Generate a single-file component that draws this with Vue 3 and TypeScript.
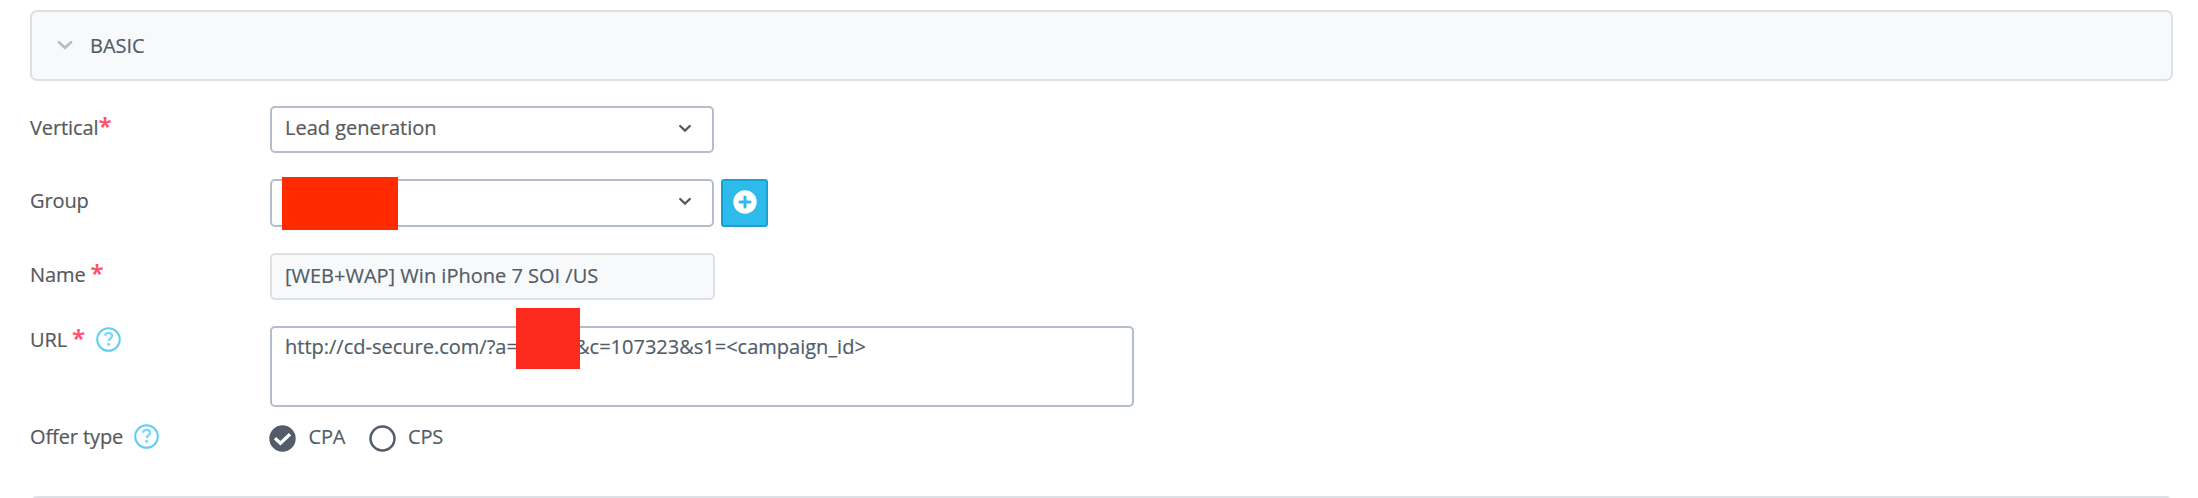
<script setup lang="ts">
import { ref } from 'vue'

type OfferType = 'CPA' | 'CPS'

const offerTypes: OfferType[] = ['CPA', 'CPS']
const selected = ref<OfferType>('CPA')
const vertical = 'Lead generation'
const offerName = '[WEB+WAP] Win iPhone 7 SOI /US'
const urlStart = 'http://cd-secure.com/?a='
const urlEnd = '&c=107323&s1=<campaign_id>'
</script>

<template>
  <main class="page">
    <header class="panel-head">
      <svg class="head-arrow" width="16" height="11" viewBox="0 0 16 11">
        <path d="M2 2.3 8 7.8 14 2.3" fill="none" stroke="#b5bfc9" stroke-width="2.8" stroke-linecap="round" />
      </svg>
      <span class="head-title">BASIC</span>
    </header>

    <section class="form">
      <div class="row row-vertical">
        <div class="label"><span>Vertical</span><i class="star tight">*</i></div>
        <div class="field select">
          <span class="value neutral">{{ vertical }}</span>
          <svg class="arrow" width="14" height="10" viewBox="0 0 14 10">
            <path d="M2.2 2 7 6.6 11.8 2" fill="none" stroke="#525b65" stroke-width="2.3" stroke-linecap="round" />
          </svg>
        </div>
      </div>

      <div class="row row-group">
        <div class="label"><span>Group</span></div>
        <div class="field select">
          <span class="mask mask-group"></span>
          <svg class="arrow" width="14" height="10" viewBox="0 0 14 10">
            <path d="M2.2 2 7 6.6 11.8 2" fill="none" stroke="#525b65" stroke-width="2.3" stroke-linecap="round" />
          </svg>
        </div>
        <button class="add" type="button" aria-label="Add group">
          <svg width="24" height="24" viewBox="0 0 24 24">
            <circle cx="12" cy="12" r="11.7" fill="#fff" />
            <path d="M12 7v10M7 12h10" stroke="#2dbbec" stroke-width="3" stroke-linecap="round" />
          </svg>
        </button>
      </div>

      <div class="row row-name">
        <div class="label"><span>Name</span><i class="star">*</i></div>
        <div class="field readonly"><span class="value name-value">{{ offerName }}</span></div>
      </div>

      <div class="row row-url">
        <div class="label">
          <span>URL</span><i class="star">*</i>
          <svg class="help help-url" width="25" height="25" viewBox="0 0 25 25">
            <circle cx="12.5" cy="12.5" r="11.3" fill="none" stroke="#5dcff3" stroke-width="2" />
            <path d="M9 8.7C9.3 6.8 10.7 5.9 12.5 5.9c2 0 3.5 1.1 3.5 2.9 0 2.6-3.3 2.7-3.3 5.2" fill="none" stroke="#7dd9f5" stroke-width="2.4" />
            <circle cx="12.6" cy="17.3" r="1.6" fill="#7dd9f5" />
          </svg>
        </div>
        <div class="field area">
          <span class="value url-start">{{ urlStart }}</span>
          <span class="value url-end">{{ urlEnd }}</span>
          <span class="mask mask-url"></span>
        </div>
      </div>

      <div class="row row-type">
        <div class="label">
          <span>Offer type</span>
          <svg class="help help-type" width="25" height="25" viewBox="0 0 25 25">
            <circle cx="12.5" cy="12.5" r="11.3" fill="none" stroke="#5dcff3" stroke-width="2" />
            <path d="M9 8.7C9.3 6.8 10.7 5.9 12.5 5.9c2 0 3.5 1.1 3.5 2.9 0 2.6-3.3 2.7-3.3 5.2" fill="none" stroke="#7dd9f5" stroke-width="2.4" />
            <circle cx="12.6" cy="17.3" r="1.6" fill="#7dd9f5" />
          </svg>
        </div>
        <div class="radios">
          <div v-for="type in offerTypes" :key="type" class="radio" @click="selected = type">
            <svg width="27" height="27" viewBox="0 0 27 27">
              <template v-if="selected === type">
                <circle cx="13.5" cy="13.5" r="13.2" fill="#525d69" />
                <path d="M6 13.3 11.4 18.3 21 9.3" fill="none" stroke="#fff" stroke-width="3.3" />
              </template>
              <circle v-else cx="13.5" cy="13.5" r="12" fill="none" stroke="#525d69" stroke-width="2.5" />
            </svg>
            <span>{{ type }}</span>
          </div>
        </div>
      </div>
    </section>

    <div class="next-panel"></div>
  </main>
</template>

<style scoped>
.page {
  box-sizing: border-box;
  height: 498px;
  padding: 10px 25px 0 30px;
  overflow: hidden;
  background: #fff;
  color: #535960;
  font: 20px/28px "Open Sans", "Noto Sans", sans-serif;
  -webkit-text-stroke: 0.2px;
}
.page * { box-sizing: border-box; }
.panel-head {
  display: flex;
  height: 71px;
  padding: 21px 0 0 25px;
  border: 2px solid #dde1e6;
  border-radius: 7px;
  background: #f8f9fb;
  color: #525d69;
}
.head-arrow { margin-top: 7px; }
.head-title { margin: -1px 0 0 17px; }
.form {
  display: flex;
  flex-direction: column;
  height: 415px;
  padding-top: 25px;
}
.row { display: flex; align-items: flex-start; }
.row-vertical { height: 73px; }
.row-group { height: 74px; }
.row-name { height: 73px; }
.row-url { height: 98px; }
.row-type { height: 60px; }
.label {
  display: flex;
  flex: 0 0 240px;
  color: #58595b;
  letter-spacing: -0.1px;
  white-space: nowrap;
}
.row-vertical .label,
.row-group .label,
.row-name .label { padding-top: 8px; }
.row-type .label { margin-top: -1px; }
.star {
  margin: -2px 0 0 5px;
  color: #ff4f69;
  font: normal 600 24px/28px "Open Sans", sans-serif;
}
.star.tight { margin-left: 0; }
.help { display: block; }
.help-url { margin: 1px 0 0 11px; }
.help-type { margin: 1px 0 0 11px; }
.field {
  display: flex;
  position: relative;
  width: 444px;
  height: 47px;
  border: 2px solid #b4bec8;
  border-radius: 5px;
  background: #fff;
}
.value { padding: 6px 0 0 13px; color: #525d69; white-space: pre; }
.value.neutral { color: #58595b; }
.value.name-value { padding-top: 7px; }
.arrow { margin: 16px 20px 0 auto; }
.row-group .field { height: 48px; }
.readonly { width: 445px; border-color: #dde1e6; background: #f8f9fb; }
.add {
  display: flex;
  align-items: flex-start;
  justify-content: center;
  width: 47px;
  height: 48px;
  margin-left: 7px;
  padding: 9px 0 0;
  border: 2px solid #1ca0d0;
  border-radius: 3px;
  background: #2dbbec;
}
.area { width: 864px; height: 81px; }
.area .value { padding-top: 5px; }
.area .url-start { width: 246px; flex: none; }
.area .url-end { margin-left: 57px; padding-left: 0; }
.mask { position: absolute; }
.mask-group { left: 10px; top: -4px; width: 116px; height: 53px; background: #ff2a00; }
.mask-url { left: 244px; top: -20px; width: 64px; height: 61px; background: #fd2b1e; }
.radios { display: flex; padding: 1px 0 0; margin-left: -1px; color: #525d69; }
.radio { display: flex; width: 99.5px; }
.radio span { margin: -2px 0 0 12.5px; letter-spacing: -0.2px; }
.next-panel {
  height: 71px;
  border: 2px solid #dde1e6;
  border-radius: 7px;
  background: #f8f9fb;
}
</style>
